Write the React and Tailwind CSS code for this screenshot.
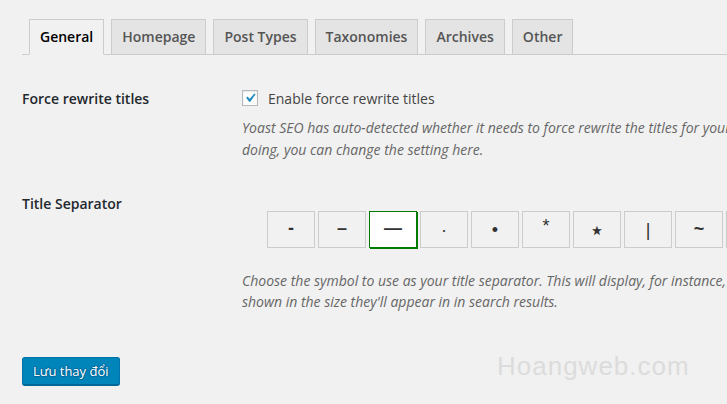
import React from "react";

const tabs = ["General", "Homepage", "Post Types", "Taxonomies", "Archives", "Other"];
const seps = ["-", "–", "—", "·", "•", "*", "⋆", "|", "~", "«"];

export default function App() {
  return (
    <div
      className="relative w-[727px] h-[404px] overflow-hidden bg-[#f1f1f1] text-[#444]"
      style={{ fontFamily: '"Open Sans", "Noto Sans", sans-serif' }}
    >
      <div className="pl-[22px]">
        {/* tabs */}
        <div className="flex pt-[19px] border-b border-[#ccc]">
          {tabs.map((t, i) => (
            <div
              key={t}
              className={
                "ml-[7px] -mb-px px-[10px] pt-[5px] pb-[5px] text-[14px] leading-[24px] font-semibold border border-[#ccc] whitespace-nowrap " +
                (i === 0
                  ? "bg-[#f1f1f1] text-black border-b-[#f1f1f1]"
                  : "bg-[#e4e4e4] text-[#555]")
              }
            >
              {t}
            </div>
          ))}
        </div>

        {/* row 1 */}
        <div className="flex mt-[35px]">
          <div className="w-[220px] shrink-0 text-[14px] leading-[16px] font-semibold text-[#23282d] pt-px">
            Force rewrite titles
          </div>
          <div className="flex flex-col">
            <div className="flex items-center h-[16px]">
              <div className="w-[16px] h-[16px] border border-[#b4b9be] bg-[#fefefe] flex items-center justify-center shadow-[inset_0_1px_2px_rgba(0,0,0,0.1)]">
                <svg width="18" height="18" viewBox="0 0 20 20" className="shrink-0 -mt-px">
                  <path
                    d="M14.83 4.89l1.34.94-5.81 8.38H9.02L5.78 9.67l1.34-1.25 2.57 2.4z"
                    fill="#1e8cbe"
                  />
                </svg>
              </div>
              <span className="ml-[10px] text-[14px] leading-[16px] text-[#444] whitespace-nowrap pt-px">
                Enable force rewrite titles
              </span>
            </div>
            <div className="mt-[11px] text-[14px] leading-[22px] italic text-[#666] whitespace-nowrap">
              <div>
                Yoast SEO has auto-detected whether it needs to force rewrite the titles for your
              </div>
              <div>doing, you can change the setting here.</div>
            </div>
          </div>
        </div>

        {/* row 2 */}
        <div className="flex mt-[35px]">
          <div className="w-[220px] shrink-0 text-[14px] leading-[16px] font-semibold text-[#23282d]">
            Title Separator
          </div>
          <div className="flex flex-col">
            <div
              className="flex mt-[15px] ml-[25px] gap-[3px]"
              style={{ fontFamily: '"Liberation Sans", Arial, "DejaVu Sans", sans-serif' }}
            >
              {seps.map((s, i) => (
                <div
                  key={i}
                  className={
                    "w-[48px] h-[37px] shrink-0 flex items-center justify-center leading-none text-[#333] border " +
                    (s === "⋆" ? "text-[26px] " : "text-[18px] ") +
                    (s === "*" ? "pb-[8px] text-[16px] " : "") +
                    (s === "~" ? "pb-[2px] font-bold " : "") +
                    (s === "|" ? "text-[#2b5a9c] " : "") +
                    (s === "-" || s === "–" || s === "—" ? "pb-[3px] font-bold " : "") +
                    (i === 2
                      ? "bg-white border-[#007a00] shadow-[1px_1px_0_#007a00]"
                      : "border-[#ccc]")
                  }
                >
                  {s}
                </div>
              ))}
            </div>
            <div className="mt-[22px] text-[14px] leading-[21px] italic text-[#666] whitespace-nowrap">
              <div>
                Choose the symbol to use as your title separator. This will display, for instance,
              </div>
              <div>shown in the size they'll appear in in search results.</div>
            </div>
          </div>
        </div>

        {/* button */}
        <div className="mt-[45px] flex">
          <button className="h-[28px] px-[10px] pb-px text-[13px] leading-[26px] text-white bg-[#0085ba] border border-[#0073aa] border-b-[#006799] rounded-[3px] shadow-[0_1px_0_#006799] [text-shadow:0_-1px_1px_#006799,1px_0_1px_#006799,0_1px_1px_#006799,-1px_0_1px_#006799] whitespace-nowrap">
            Lưu thay đổi
          </button>
        </div>
      </div>

      <div
        className="absolute left-[497px] top-[350px] text-[26px] leading-[32px] tracking-[1px] text-[#dcdcdc]"
        style={{ fontFamily: '"Liberation Sans", Arial, sans-serif' }}
      >
        Hoangweb.com
      </div>
    </div>
  );
}
